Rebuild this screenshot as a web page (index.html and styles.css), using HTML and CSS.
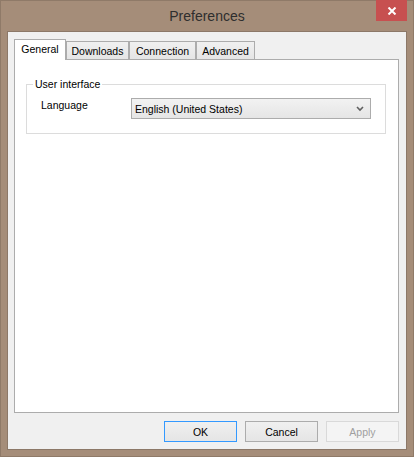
FILE: index.html
```html
<!DOCTYPE html>
<html>
<head>
<meta charset="utf-8">
<title>Preferences</title>
<link rel="stylesheet" href="styles.css">
</head>
<body>
<div class="window">
  <div class="titlebar">
    <div class="title-spacer"></div>
    <div class="title">Preferences</div>
    <button class="close" aria-label="Close">
      <svg width="10" height="8" viewBox="0 0 10 8"><path d="M1.5 0.5 L8.5 7.5 M8.5 0.5 L1.5 7.5" stroke="#fff" stroke-width="2" fill="none"/></svg>
    </button>
  </div>
  <div class="client">
    <div class="tabs">
      <div class="tab selected w-general">General</div>
      <div class="tab w-downloads">Downloads</div>
      <div class="tab w-connection">Connection</div>
      <div class="tab w-advanced">Advanced</div>
    </div>
    <div class="panel">
      <fieldset class="group">
        <legend>User interface</legend>
        <div class="row">
          <div class="label">Language</div>
          <div class="combo">
            <span>English (United States)</span>
            <svg width="8" height="6" viewBox="0 0 8 6"><path d="M1 1 L4 4 L7 1" stroke="#606060" stroke-width="1.6" fill="none"/></svg>
          </div>
        </div>
      </fieldset>
    </div>
    <div class="buttons">
      <button class="btn default">OK</button>
      <button class="btn">Cancel</button>
      <button class="btn disabled">Apply</button>
    </div>
  </div>
</div>
</body>
</html>
```
FILE: styles.css
```css
html, body {
  margin: 0;
  padding: 0;
  background: #a58d79;
}
body {
  font-family: "Liberation Sans", Arial, sans-serif;
  font-size: 10.5px;
  color: #000;
}
.window {
  width: 414px;
  height: 457px;
  box-sizing: border-box;
  border: 1px solid #8f7a68;
  background: #a58d79;
  display: flex;
  flex-direction: column;
}
.titlebar {
  margin-top: -1px;
  height: 31px;
  flex: 0 0 auto;
  display: grid;
  grid-template-columns: 1fr auto 1fr;
  align-items: start;
}
.title {
  font-size: 14px;
  line-height: 30px;
  padding-top: 1px;
  color: #2e2e2e;
  text-align: center;
}
.close {
  justify-self: end;
  margin-right: 6px;
  width: 31px;
  height: 21px;
  border: 0;
  padding: 0;
  background: #c75050;
  display: flex;
  align-items: center;
  justify-content: center;
}
.client {
  margin: 0 6px 6px 6px;
  height: 420px;
  box-sizing: border-box;
  border: 1px solid #8c7868;
  background: #f0f0f0;
  padding: 7px 7px 0 6px;
  display: flex;
  flex-direction: column;
}
.tabs {
  height: 20px;
  display: flex;
  align-items: flex-end;
}
.tab {
  box-sizing: border-box;
  height: 18px;
  border: 1px solid #acacac;
  border-bottom: 0;
  background: linear-gradient(#f0f0f0, #e5e5e5);
  line-height: 12px;
  padding-top: 3px;
  text-align: center;
  white-space: nowrap;
}
.tab.selected {
  height: 21px;
  margin-bottom: -1px;
  background: #fff;
  position: relative;
  z-index: 1;
}
.w-general { width: 52px; }
.w-downloads { width: 63px; }
.w-connection { width: 67px; }
.w-advanced { width: 59px; }
.panel {
  height: 354px;
  box-sizing: border-box;
  border: 1px solid #acacac;
  background: #fff;
  padding: 18px 12px 0 11px;
}
.group {
  margin: 0;
  border: 1px solid #dcdcdc;
  padding: 8px 0 14px 6px;
  min-width: 0;
}
.group legend {
  padding: 0 2px;
  line-height: 12px;
}
.row {
  display: flex;
  align-items: flex-start;
  padding-left: 8px;
}
.label {
  width: 90px;
  line-height: 12px;
  margin-top: 1px;
}
.combo {
  width: 240px;
  height: 21px;
  box-sizing: border-box;
  border: 1px solid #acacac;
  background: linear-gradient(#f2f2f2, #e5e5e5);
  display: flex;
  align-items: center;
  justify-content: space-between;
  padding: 0 6px 0 3px;
  line-height: 12px;
}
.buttons {
  margin-top: 8px;
  display: flex;
  justify-content: flex-end;
  gap: 8px;
}
.btn {
  width: 73px;
  height: 21px;
  box-sizing: border-box;
  border: 1px solid #acacac;
  background: linear-gradient(#f0f0f0, #e5e5e5);
  font-family: "Liberation Sans", Arial, sans-serif;
  font-size: 10.5px;
  color: #000;
  padding: 0;
  margin: 0;
}
.btn.default {
  border-color: #3399ff;
}
.btn.disabled {
  border-color: #d9d9d9;
  background: #f4f4f4;
  color: #a0a0a0;
}
```
